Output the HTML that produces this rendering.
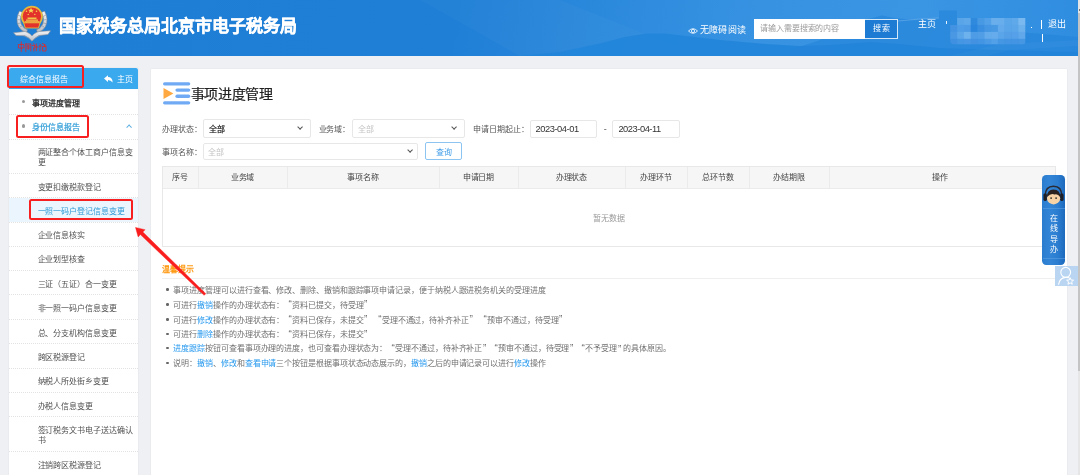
<!DOCTYPE html>
<html lang="zh-CN"><head><meta charset="utf-8">
<style>
*{margin:0;padding:0;box-sizing:border-box}
html,body{width:1080px;height:475px;overflow:hidden;background:#eff0f3;font-family:"Liberation Sans",sans-serif;color:#333}
div,span{white-space:nowrap}
i{font-style:normal}
.a{position:absolute}
.t{position:absolute;height:12px;line-height:12px;font-size:8px;letter-spacing:-0.08px}
#hdr{position:absolute;left:0;top:0;width:1078px;height:56px;background:linear-gradient(100deg,#1e7dd5 0%,#1f7fd6 42%,#2b89dc 55%,#3792e2 70%,#3a95e3 85%,#2f8de0 100%);overflow:hidden}
#title{position:absolute;left:59.4px;top:14.8px;font-size:17px;font-weight:bold;color:#fff;line-height:24px;-webkit-text-stroke:0.35px #fff}
.ht{position:absolute;font-size:9px;line-height:13px;color:#fff;letter-spacing:0.35px}
#side{position:absolute;left:9px;top:68px;width:129px;height:420px;background:#fff;box-shadow:0 0 1px rgba(0,0,0,.12)}
#main{position:absolute;left:151px;top:68.5px;width:916px;height:420px;background:#fff;box-shadow:0 0 1px rgba(0,0,0,.12)}
.sep{position:absolute;left:9px;width:129px;height:1px;background:repeating-linear-gradient(90deg,#e3e3e3 0 1px,transparent 1px 2px)}
.rb{position:absolute;border:2px solid #f71f1f;border-radius:2.5px}
.dot{position:absolute;width:3.3px;height:3.3px;border-radius:50%;background:#999}
.sub{color:#505050;left:37.5px}
.sel{color:#2f9ad6}
.lbl{color:#555}
.box{position:absolute;border:1px solid #e7e7e7;border-radius:2px;background:#fff}
.chev{position:absolute;width:4.2px;height:4.2px;border-right:1px solid #555;border-bottom:1px solid #555;transform:rotate(45deg)}
.th{position:absolute;top:166px;height:23px;line-height:23px;font-size:8px;letter-spacing:-0.08px;color:#444;text-align:center}
.vl{position:absolute;top:167px;width:1px;height:22px;background:#ebebeb}
.tip{position:absolute;left:173.4px;font-size:8px;letter-spacing:-0.08px;color:#707070;height:12px;line-height:12px}
.tip b{font-weight:normal;color:#2699ee}
.tip s{display:inline-block;width:2.5px;text-decoration:none}
.q1,.q2{display:inline-block;width:7.92px;letter-spacing:0;font-size:10px;line-height:8px;vertical-align:-0.6px}
.q1{text-align:right;padding-right:0.3px}
.q2{text-align:left;padding-left:0.6px}
.bul{position:absolute;left:166.4px;width:2.4px;height:2.4px;background:#666;border-radius:50%}
</style></head><body><div id="wrap" style="position:absolute;left:0;top:0;width:1080px;height:475px;overflow:hidden;will-change:transform">
<div id="hdr">
  <svg class="a" style="left:0;top:0" width="1078" height="56">
    <path d="M420 0 L560 0 L700 56 L520 56 Z" fill="#ffffff" opacity="0.025"/>
    <path d="M520 56 L560 52 L600 43.5 L625 37 L645 33.8 L665 33.6 L690 36.5 L720 40 L760 43.5 L800 46 L830 45 L870 42 L900 44 L940 48 L1000 50 L1078 52 L1078 56 Z" fill="#2185d9" opacity="0.9"/>
    <path d="M790 50 L820 40 L845 28 L868 19 L882 15.5 L897 18.5 L915 19.5 L939 18 L939 10.5 L957 10.5 L957 23 L985 28 L1030 33 L1078 37 L1078 56 L790 56 Z" fill="#2383d8" opacity="0.6"/>
    <path d="M898 21 L920 19 L939 18" stroke="#8fc3f0" stroke-width="0.8" fill="none" opacity="0.5"/>
    <path d="M940 58 L1000 44 L1078 40 L1078 46 L1010 50 L980 58 Z" fill="#ffffff" opacity="0.03"/>
  </svg>
  <!-- logo -->
  <svg class="a" style="left:10px;top:2px" width="44" height="52" viewBox="0 0 44 52">
    <defs>
      <linearGradient id="slv" x1="0" y1="0" x2="0" y2="1"><stop offset="0" stop-color="#f4f5f7"/><stop offset="1" stop-color="#b7bcc4"/></linearGradient>
    </defs>
    <path d="M9.5 9 Q5 17 8.5 24.5 Q11.5 29.5 16.5 30.5 L17.5 27.8 Q13.5 26.5 11.5 22.5 Q9 17 12.5 10.5 Z" fill="url(#slv)" stroke="#7f858e" stroke-width="0.6"/>
    <path d="M34.5 9 Q39 17 35.5 24.5 Q32.5 29.5 27.5 30.5 L26.5 27.8 Q30.5 26.5 32.5 22.5 Q35 17 31.5 10.5 Z" fill="url(#slv)" stroke="#7f858e" stroke-width="0.6"/>
    <path d="M8 13 l3 1.5 M7.5 17.5 l3 0.5 M8 21.5 l3 -0.5 M10 25 l2.6 -1.5 M36 13 l-3 1.5 M36.5 17.5 l-3 0.5 M36 21.5 l-3 -0.5 M34 25 l-2.6 -1.5" stroke="#868c94" stroke-width="0.6"/>
    <path d="M3.5 30.8 L15 29.5 Q20 31 22 34 Q24 31 29 29.5 L40.5 28.8 L38 32.5 L29 33.5 Q25 35.5 22 39.2 Q19 35.5 15 33.8 L6 33.5 Z" fill="url(#slv)" stroke="#8a9098" stroke-width="0.6"/>
    <path d="M14 33.8 Q18.5 35.5 22 38.8 Q25.5 35.5 30 33.6" stroke="#9ba1a9" stroke-width="0.5" fill="none"/>
    <circle cx="21.9" cy="14.6" r="10.9" fill="#e6b83c"/>
    <circle cx="21.9" cy="14.6" r="9.2" fill="#e3322b"/>
    <path d="M13.7 20.8 h16.4 l-1.6 5.2 h-13.2 z" fill="#e3322b" stroke="#e6b83c" stroke-width="0.9"/>
    <path d="M17.5 15.5 h9 v1.5 h-9z M16 17.4 h12 v1.3 h-12z M15 19.2 h14 v1.4 h-14z" fill="#f2c64a"/>
    <path d="M21 5.8 l1 2 h2.1 l-1.7 1.2 .7 2 -2.1-1.2 -2.1 1.2 .7-2 -1.7-1.2 h2.1z" fill="#f6d452"/>
    <circle cx="16.5" cy="9.3" r=".8" fill="#f6d452"/><circle cx="26.5" cy="9.3" r=".8" fill="#f6d452"/>
    <circle cx="18.2" cy="12.4" r=".7" fill="#f6d452"/><circle cx="24.8" cy="12.4" r=".7" fill="#f6d452"/>
    <g fill="none" stroke="#ec2420" stroke-width="0.8" stroke-linecap="round">
      <path d="M8.8 42.5 h5 v3.5 h-5 z M11.3 40 v9.5"/>
      <path d="M15.8 42 h5 v7 M15.8 42 v7.5 M17 44 h2.5 M17 46 h2.5 M18.2 43.5 v4"/>
      <path d="M23.5 41.5 l1 1 M22.5 43.5 h2.5 l-1 3 M23.8 46 v3 M26.3 42 v6.8 M25.8 45 h2.2"/>
      <path d="M29.8 42 l1 1 M29.3 44 h2 M30 44 v5 M32.5 41.5 l3.5 2 M33 44.5 h3 v4.5 h-3 z M34.5 42.5 v2"/>
    </g>
  </svg>
  <div id="title">国家税务总局北京市电子税务局</div>
  <!-- eye -->
  <svg class="a" style="left:687.5px;top:27px" width="10" height="8" viewBox="0 0 10 8">
    <path d="M0.5 4 Q5 -0.6 9.5 4 Q5 8.6 0.5 4 Z" stroke="#fff" stroke-width="0.8" fill="none"/>
    <circle cx="5" cy="4" r="1.6" stroke="#fff" stroke-width="0.8" fill="none"/>
  </svg>
  <div class="ht" style="left:699.6px;top:24.4px">无障碍阅读</div>
  <div class="a" style="left:753.5px;top:19px;width:112px;height:19.5px;background:#fff"></div>
  <div class="t" style="left:760px;top:22.8px;color:#9a9a9a">请输入需要搜索的内容</div>
  <div class="a" style="left:865px;top:19px;width:33px;height:19.5px;background:#1e7bd4;border:1px solid #d6e8f8;border-left:none"></div>
  <div class="a" style="left:873px;top:23.3px;font-size:8px;letter-spacing:0.5px;line-height:12px;color:#fff">搜索</div>
  <div class="ht" style="left:918px;top:18.2px">主页</div>
  <svg class="a" style="left:950px;top:17.9px" width="76" height="27" viewBox="0 0 76 27">
    <defs><clipPath id="mc"><path d="M0 7 L7 7 L7 0 L76 0 L76 23 Q76 26.4 72 26.4 L4 26.4 Q0 26.4 0 22 Z"/></clipPath></defs>
    <g clip-path="url(#mc)">
<rect x="0.2" y="0.0" width="7.2" height="7.2" fill="#3f90e0"/>
<rect x="7.1" y="0.0" width="7.1" height="7.2" fill="#5aa5e8"/>
<rect x="13.9" y="0.0" width="7.1" height="7.2" fill="#5ea8ea"/>
<rect x="20.7" y="0.0" width="7.1" height="7.2" fill="#2f8ade"/>
<rect x="27.5" y="0.0" width="7.1" height="7.2" fill="#4899e4"/>
<rect x="34.3" y="0.0" width="7.1" height="7.2" fill="#52a0e7"/>
<rect x="41.1" y="0.0" width="7.1" height="7.2" fill="#6aafec"/>
<rect x="47.9" y="0.0" width="7.0" height="7.2" fill="#68adec"/>
<rect x="54.6" y="0.0" width="7.2" height="7.2" fill="#5aa6e9"/>
<rect x="61.5" y="0.0" width="7.0" height="7.2" fill="#5fa9ea"/>
<rect x="68.2" y="0.0" width="7.1" height="7.2" fill="#7ab9ef"/>
<rect x="0.2" y="6.9" width="7.2" height="7.3" fill="#4393e2"/>
<rect x="7.1" y="6.9" width="7.1" height="7.3" fill="#4f9de6"/>
<rect x="13.9" y="6.9" width="7.1" height="7.3" fill="#4d9be5"/>
<rect x="20.7" y="6.9" width="7.1" height="7.3" fill="#2a85dc"/>
<rect x="27.5" y="6.9" width="7.1" height="7.3" fill="#3a8fe0"/>
<rect x="34.3" y="6.9" width="7.1" height="7.3" fill="#4596e3"/>
<rect x="41.1" y="6.9" width="7.1" height="7.3" fill="#4899e4"/>
<rect x="47.9" y="6.9" width="7.0" height="7.3" fill="#62aaeb"/>
<rect x="54.6" y="6.9" width="7.2" height="7.3" fill="#5aa5e9"/>
<rect x="61.5" y="6.9" width="7.0" height="7.3" fill="#5aa6e9"/>
<rect x="68.2" y="6.9" width="7.1" height="7.3" fill="#6db1ec"/>
<rect x="0.2" y="13.9" width="7.2" height="7.2" fill="#4a98e4"/>
<rect x="7.1" y="13.9" width="7.1" height="7.2" fill="#5ba5e9"/>
<rect x="13.9" y="13.9" width="7.1" height="7.2" fill="#6eb2ed"/>
<rect x="20.7" y="13.9" width="7.1" height="7.2" fill="#4f9ce6"/>
<rect x="27.5" y="13.9" width="7.1" height="7.2" fill="#519ee6"/>
<rect x="34.3" y="13.9" width="7.1" height="7.2" fill="#64abeb"/>
<rect x="41.1" y="13.9" width="7.1" height="7.2" fill="#66acec"/>
<rect x="47.9" y="13.9" width="7.0" height="7.2" fill="#5aa5e9"/>
<rect x="54.6" y="13.9" width="7.2" height="7.2" fill="#559fe7"/>
<rect x="61.5" y="13.9" width="7.0" height="7.2" fill="#55a0e8"/>
<rect x="68.2" y="13.9" width="7.1" height="7.2" fill="#60a8ea"/>
<rect x="0.2" y="20.8" width="7.2" height="5.9" fill="#3f90e0"/>
<rect x="7.1" y="20.8" width="7.1" height="5.9" fill="#4596e3"/>
<rect x="13.9" y="20.8" width="7.1" height="5.9" fill="#4997e4"/>
<rect x="20.7" y="20.8" width="7.1" height="5.9" fill="#4392e2"/>
<rect x="27.5" y="20.8" width="7.1" height="5.9" fill="#4394e3"/>
<rect x="34.3" y="20.8" width="7.1" height="5.9" fill="#4b9ae5"/>
<rect x="41.1" y="20.8" width="7.1" height="5.9" fill="#52a0e7"/>
<rect x="47.9" y="20.8" width="7.0" height="5.9" fill="#4596e3"/>
<rect x="54.6" y="20.8" width="7.2" height="5.9" fill="#4394e2"/>
<rect x="61.5" y="20.8" width="7.0" height="5.9" fill="#4394e2"/>
<rect x="68.2" y="20.8" width="7.1" height="5.9" fill="#4596e3"/>
    </g>
  </svg>
  <div class="a" style="left:945.5px;top:21px;width:1.2px;height:2.5px;background:#e8f2fc"></div>
  <div class="a" style="left:1031px;top:26.5px;width:1.2px;height:1.2px;background:#fff"></div>
  <div class="a" style="left:1041px;top:20px;width:1px;height:8.5px;background:#fff"></div>
  <div class="a" style="left:1041.5px;top:34px;width:1px;height:8px;background:#fff"></div>
  <div class="ht" style="left:1048px;top:18.2px">退出</div>
</div>

<div id="side"></div>
<div class="a" style="left:9px;top:68px;width:129px;height:21.3px;background:#3ba9ee;border-radius:2px 2px 0 0"></div>
<div class="t" style="left:20px;top:74.2px;color:#fff">综合信息报告</div>
<svg class="a" style="left:104px;top:74.5px" width="9" height="8" viewBox="0 0 9 8"><path d="M0 3.6 L4 0.2 L4 2.1 Q8.6 2.1 8.6 7.6 Q7 4.9 4 4.9 L4 7 Z" fill="#fff"/></svg>
<div class="t" style="left:117px;top:74px;color:#fff">主页</div>
<div class="rb" style="left:7px;top:65px;width:77px;height:23px"></div>

<div class="dot" style="left:22.1px;top:99.9px"></div>
<div class="t" style="left:32px;top:97.9px;color:#222;-webkit-text-stroke:0.25px #222">事项进度管理</div>
<div class="dot" style="left:22.1px;top:124.4px"></div>
<div class="t" style="left:32px;top:122.2px;color:#2a9ad6;-webkit-text-stroke:0.2px #2a9ad6">身份信息报告</div>
<div class="chev" style="left:127.3px;top:125.3px;border-color:#5aaee0;transform:rotate(-135deg)"></div>
<div class="a" style="left:9px;top:197.5px;width:129px;height:24.5px;background:#ebf5fd"></div>
<div class="sep" style="top:113.9px"></div>
<div class="sep" style="top:138.8px"></div>
<div class="sep" style="top:172.9px"></div>
<div class="sep" style="top:196.6px"></div>
<div class="sep" style="top:221.6px"></div>
<div class="sep" style="top:245.8px"></div>
<div class="sep" style="top:269.8px"></div>
<div class="sep" style="top:294.2px"></div>
<div class="sep" style="top:318.7px"></div>
<div class="sep" style="top:343.1px"></div>
<div class="sep" style="top:368.0px"></div>
<div class="sep" style="top:392.0px"></div>
<div class="sep" style="top:416.2px"></div>
<div class="sep" style="top:450.7px"></div>
<div class="t sub" style="top:147.4px">两证整合个体工商户信息变</div>
<div class="t sub" style="top:157.1px">更</div>
<div class="t sub" style="top:181.5px">变更扣缴税款登记</div>
<div class="t sub sel" style="top:205.5px">一照一码户登记信息变更</div>
<div class="t sub" style="top:230.0px">企业信息核实</div>
<div class="t sub" style="top:254.4px">企业划型核查</div>
<div class="t sub" style="top:278.5px">三证（五证）合一变更</div>
<div class="t sub" style="top:303.0px">非一照一码户信息变更</div>
<div class="t sub" style="top:327.7px">总、分支机构信息变更</div>
<div class="t sub" style="top:351.9px">跨区税源登记</div>
<div class="t sub" style="top:376.3px">纳税人所处街乡变更</div>
<div class="t sub" style="top:400.8px">办税人信息变更</div>
<div class="t sub" style="top:424.6px">签订税务文书电子送达确认</div>
<div class="t sub" style="top:435.0px">书</div>
<div class="t sub" style="top:459.5px">注销跨区税源登记</div>
<div class="rb" style="left:16px;top:114.5px;width:73px;height:23px"></div>
<div class="rb" style="left:28.5px;top:199px;width:104px;height:20.8px"></div>

<div id="main"></div>
<svg class="a" style="left:162px;top:81px" width="30" height="25" viewBox="0 0 30 25">
  <rect x="1" y="1.2" width="27.3" height="3.2" rx="1.6" fill="#70aaf4"/>
  <rect x="13.4" y="7.4" width="14.9" height="3.3" rx="1.65" fill="#70aaf4"/>
  <rect x="13.4" y="13.6" width="14.9" height="3.3" rx="1.65" fill="#70aaf4"/>
  <rect x="1" y="20.2" width="27.3" height="3.3" rx="1.65" fill="#70aaf4"/>
  <path d="M1.5 7 L11.4 12.5 L1.5 18 Z" fill="#ffa940"/>
</svg>
<div class="a" style="left:190.8px;top:84px;font-size:14px;letter-spacing:-0.4px;line-height:20px;color:#222;-webkit-text-stroke:0.2px #222">事项进度管理</div>

<div class="t lbl" style="left:162px;top:124px">办理状态：</div>
<div class="box" style="left:203px;top:119.2px;width:107.5px;height:18.5px"></div>
<div class="t" style="left:209.3px;top:124px;color:#222;-webkit-text-stroke:0.2px #222">全部</div>
<div class="chev" style="left:297.7px;top:124.8px"></div>
<div class="t lbl" style="left:318.5px;top:124px">业务域：</div>
<div class="box" style="left:351.5px;top:119.2px;width:113px;height:18.5px"></div>
<div class="t" style="left:357.8px;top:124px;color:#c4c4c4">全部</div>
<div class="chev" style="left:451.7px;top:124.8px"></div>
<div class="t lbl" style="left:473px;top:124px">申请日期起止：</div>
<div class="box" style="left:529.5px;top:119.5px;width:67.2px;height:18px"></div>
<div class="a" style="left:535.6px;top:122.5px;font-size:9.3px;line-height:12px;color:#333;letter-spacing:-0.45px">2023-04-01</div>
<div class="a" style="left:603.7px;top:122.5px;font-size:9px;line-height:12px;color:#555">-</div>
<div class="box" style="left:612.2px;top:119.5px;width:67.4px;height:18px"></div>
<div class="a" style="left:618.4px;top:122.5px;font-size:9.3px;line-height:12px;color:#333;letter-spacing:-0.45px">2023-04-11</div>

<div class="t lbl" style="left:162px;top:147px">事项名称：</div>
<div class="box" style="left:203px;top:142.6px;width:215px;height:17px"></div>
<div class="t" style="left:208px;top:147px;color:#c4c4c4">全部</div>
<div class="chev" style="left:408.4px;top:148px"></div>
<div class="a" style="left:425.2px;top:142.1px;width:37.2px;height:18px;border:1px solid #8cc5f2;border-radius:2px"></div>
<div class="t" style="left:435.6px;top:146.7px;color:#3a9ae8">查询</div>

<div class="a" style="left:162px;top:166px;width:894px;height:81px;border:1px solid #e8e8e8"></div>
<div class="a" style="left:163px;top:167px;width:892px;height:22px;background:#f6f6f6;border-bottom:1px solid #ebebeb"></div>
<div class="vl" style="left:197.5px"></div>
<div class="vl" style="left:286.5px"></div>
<div class="vl" style="left:438.5px"></div>
<div class="vl" style="left:518.2px"></div>
<div class="vl" style="left:624.7px"></div>
<div class="vl" style="left:687px"></div>
<div class="vl" style="left:749.2px"></div>
<div class="vl" style="left:829.2px"></div>
<div class="th" style="left:162px;width:36px">序号</div>
<div class="th" style="left:198px;width:89px">业务域</div>
<div class="th" style="left:287px;width:152px">事项名称</div>
<div class="th" style="left:439px;width:79px">申请日期</div>
<div class="th" style="left:518px;width:107px">办理状态</div>
<div class="th" style="left:625px;width:62px">办理环节</div>
<div class="th" style="left:687px;width:62px">总环节数</div>
<div class="th" style="left:749px;width:80px">办结期限</div>
<div class="th" style="left:829px;width:222px">操作</div>
<div class="t" style="left:593.2px;top:212.9px;color:#9a9a9a">暂无数据</div>

<div class="t" style="left:162px;top:263.9px;color:#ff9a15;font-weight:bold">温馨提示</div>
<div class="a" style="left:162px;top:277.6px;width:905px;height:1px;background:#efefef"></div>
<div class="bul" style="top:288.3px"></div>
<div class="tip" style="top:284.7px">事项进度管理可以进行查看、修改、删除、撤销和跟踪事项申请记录，便于纳税人跟进税务机关的受理进度</div>
<div class="bul" style="top:303.4px"></div>
<div class="tip" style="top:299.8px">可进行<b>撤销</b>操作的办理状态有：<i class="q1">“</i>资料已提交，待受理<i class="q2">”</i></div>
<div class="bul" style="top:318.2px"></div>
<div class="tip" style="top:314.6px">可进行<b>修改</b>操作的办理状态有：<i class="q1">“</i>资料已保存，未提交<i class="q2">”</i><s></s><i class="q1">“</i>受理不通过，待补齐补正<i class="q2">”</i><s></s><i class="q1">“</i>预审不通过，待受理<i class="q2">”</i></div>
<div class="bul" style="top:332.8px"></div>
<div class="tip" style="top:329.2px">可进行<b>删除</b>操作的办理状态有：<i class="q1">“</i>资料已保存，未提交<i class="q2">”</i></div>
<div class="bul" style="top:347.0px"></div>
<div class="tip" style="top:343.4px"><b>进度跟踪</b>按钮可查看事项办理的进度，也可查看办理状态为：<i class="q1">“</i>受理不通过，待补齐补正<i class="q2">”</i><i class="q1">“</i>预审不通过，待受理<i class="q2">”</i><i class="q1">“</i>不予受理<i class="q2" style="width:6.5px"><i class="q2">”</i></i>的具体原因。</div>
<div class="bul" style="top:361.8px"></div>
<div class="tip" style="top:358.2px">说明：<b>撤销</b>、<b>修改</b>和<b>查看申请</b>三个按钮是根据事项状态动态展示的，<b>撤销</b>之后的申请记录可以进行<b>修改</b>操作</div>

<svg class="a" style="left:0;top:0" width="1080" height="475">
  <path d="M135.50 227.40 L145.09 229.71 L142.87 232.01 L205.83 293.64 L204.17 295.36 L140.36 234.60 L138.14 236.90 Z" fill="#fa1d1d" stroke="#fa1d1d" stroke-width="0.4" stroke-linejoin="round"/>
</svg>

<div class="a" style="left:1042.4px;top:175.4px;width:22.7px;height:90px;border-radius:4.2px;background:linear-gradient(90deg,#2a7ccf 0%,#3285d6 35%,#2a7cd0 70%,#1c69bd 100%)"></div>
<svg class="a" style="left:1042.4px;top:183px" width="23" height="24" viewBox="0 0 23 24">
  <path d="M3.2 13 Q3.2 3.3 11.5 3.3 Q19.8 3.3 19.8 13" stroke="#2a2a33" stroke-width="1.5" fill="none"/>
  <rect x="1.4" y="10.5" width="3.5" height="7.5" rx="1.4" fill="#1e1e25"/>
  <rect x="18.1" y="10.5" width="3.5" height="7.5" rx="1.4" fill="#1e1e25"/>
  <ellipse cx="11.6" cy="15.3" rx="6.6" ry="6.1" fill="#f7d3a6"/>
  <path d="M5 14 Q4.8 6.6 11.6 6.4 Q18.4 6.6 18.2 14 Q15.5 10.2 12.5 11.5 Q9.2 9.6 5 14 Z" fill="#2b2222"/>
  <circle cx="9.1" cy="15.1" r=".85" fill="#222"/><circle cx="14.1" cy="15.1" r=".85" fill="#222"/>
</svg>
<div class="a" style="left:1043px;top:207.5px;width:21.5px;height:1px;background:#5fa2e2;opacity:.55"></div>
<div class="a" style="left:1049.5px;top:214.4px;width:9px;font-size:8px;line-height:10.1px;color:#fff;white-space:normal;text-align:center">在线导办</div>
<div class="a" style="left:1043px;top:257.5px;width:21.5px;height:1px;background:#5fa2e2;opacity:.55"></div>
<div class="a" style="left:1055.4px;top:266px;width:22.3px;height:20.3px;background:#b9d5f2"></div>
<svg class="a" style="left:1055.4px;top:266px" width="22" height="21" viewBox="0 0 22 21">
  <circle cx="10.7" cy="6.3" r="4.9" stroke="#fff" stroke-width="1.1" fill="none"/>
  <path d="M3.6 18.3 Q4.6 12.3 10.2 11.4 Q12.4 11.2 13.8 11.7" stroke="#fff" stroke-width="1.1" fill="none" stroke-linecap="round"/>
  <path d="M15.10 11.60 L16.04 14.01 L18.62 14.16 L16.62 15.79 L17.27 18.29 L15.10 16.90 L12.93 18.29 L13.58 15.79 L11.58 14.16 L14.16 14.01 Z" stroke="#fff" stroke-width="1" fill="#b9d5f2" stroke-linejoin="round"/>
</svg>
<div class="a" style="left:1078px;top:0;width:2px;height:475px;background:#e6e6e6"></div>
<div class="a" style="left:1078px;top:12.5px;width:2px;height:358px;background:#c4c4c4"></div>
<div class="a" style="left:1078.5px;top:8.6px;width:1.5px;height:2px;background:#777"></div>
</div></body></html>
